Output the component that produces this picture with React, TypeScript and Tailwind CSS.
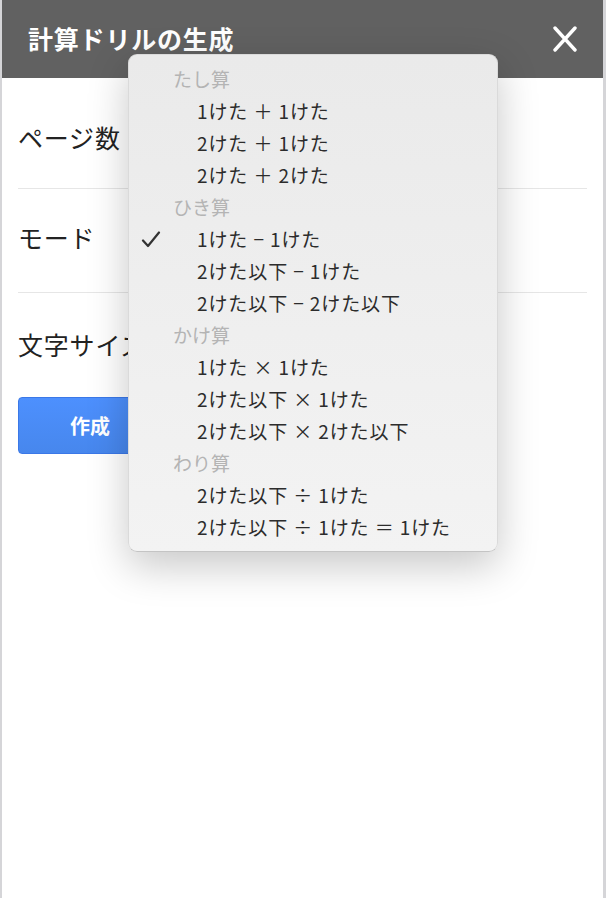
import React from 'react';

const font = { fontFamily: '"Noto Sans CJK JP", "Noto Sans", sans-serif' };

type Item = { label: string; header?: boolean; checked?: boolean };

const items: Item[] = [
  { label: 'たし算', header: true },
  { label: '1けた ＋ 1けた' },
  { label: '2けた ＋ 1けた' },
  { label: '2けた ＋ 2けた' },
  { label: 'ひき算', header: true },
  { label: '1けた − 1けた', checked: true },
  { label: '2けた以下 − 1けた' },
  { label: '2けた以下 − 2けた以下' },
  { label: 'かけ算', header: true },
  { label: '1けた × 1けた' },
  { label: '2けた以下 × 1けた' },
  { label: '2けた以下 × 2けた以下' },
  { label: 'わり算', header: true },
  { label: '2けた以下 ÷ 1けた' },
  { label: '2けた以下 ÷ 1けた ＝ 1けた' },
];

const ModeMenu: React.FC = () => (
  <div className="absolute left-[126px] top-[54px] w-[370px] rounded-[9px] border border-[#dadada] border-b-[#c4c4c4] bg-gradient-to-b from-[#eaeaea] to-[#f3f3f3] py-2 shadow-[0_14px_40px_rgba(0,0,0,0.22)]">
    {items.map((it) => (
      <div key={it.label} className="relative flex items-center h-8">
        {it.checked && (
          <svg className="absolute left-[12px] top-[8px]" width="20" height="17" viewBox="0 0 20 17" fill="none">
            <path d="M2 9.5 L7 15 L18 1.5" stroke="#333" strokeWidth="2.2" strokeLinecap="round" strokeLinejoin="round" />
          </svg>
        )}
        {it.header ? (
          <span className="pl-[44px] text-[19px] text-[#b4b4b4]">{it.label}</span>
        ) : (
          <span className="pl-[68px] text-[19px] text-[#2c2c2c] tracking-[0.9px]">{it.label}</span>
        )}
      </div>
    ))}
  </div>
);

const App: React.FC = () => {
  return (
    <div className="relative h-[898px] w-[606px] bg-white border-l-2 border-r-[3px] border-[#d5d5d8] overflow-hidden" style={font}>
      <header className="flex items-center justify-between h-[78px] bg-[#616161] pl-[26px] pr-[26px]">
        <h1 className="text-[25px] font-bold text-white tracking-[0.8px]">計算ドリルの生成</h1>
        <svg width="24" height="26" viewBox="0 0 24 26" fill="none">
          <path d="M2 2 L22 24 M22 2 L2 24" stroke="#fff" strokeWidth="3.4" strokeLinecap="round" />
        </svg>
      </header>
      <div className="pl-[16px] pr-[16px]">
        <div className="flex items-center h-[111px] pt-[9px] border-b border-[#e6e6e6]">
          <span className="text-[25px] text-[#222] tracking-[0.8px]">ページ数</span>
        </div>
        <div className="flex items-center h-[104px] pb-[6px] border-b border-[#e6e6e6]">
          <span className="text-[25px] text-[#222] tracking-[0.8px]">モード</span>
        </div>
        <div className="flex items-center h-[104px]">
          <span className="text-[25px] text-[#222] tracking-[0.8px]">文字サイズ</span>
        </div>
        <button className="h-[57px] w-[144px] rounded-[4px] border border-[#3b78e7] bg-gradient-to-b from-[#4d90fe] to-[#4787ed] text-[20px] font-bold text-white">
          作成
        </button>
      </div>
      <ModeMenu />
    </div>
  );
};

export default App;
